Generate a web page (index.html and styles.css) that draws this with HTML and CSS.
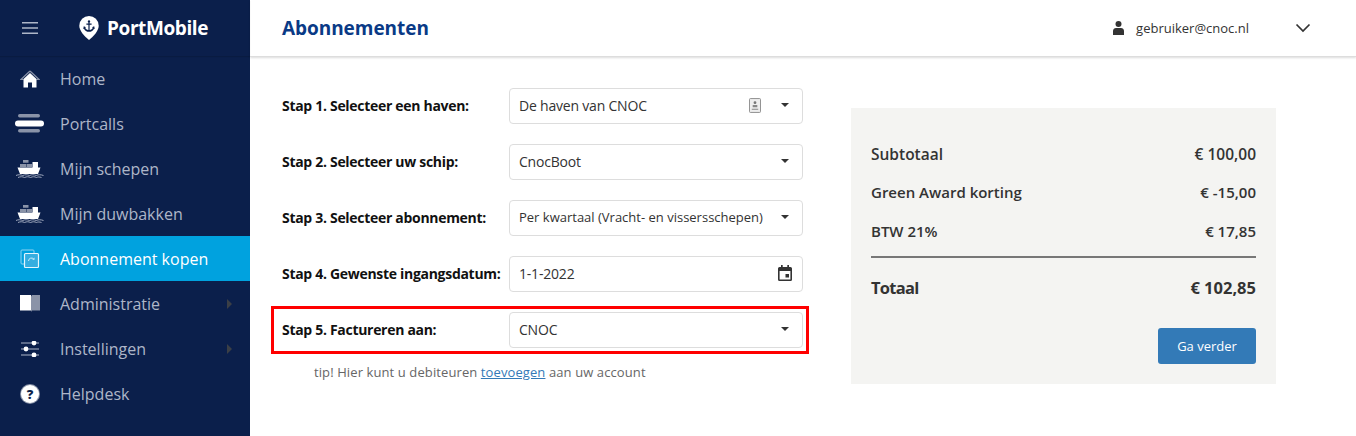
FILE: index.html
```html
<!DOCTYPE html>
<html lang="nl">
<head>
<meta charset="utf-8">
<title>Abonnementen</title>
<link rel="stylesheet" href="styles.css">
</head>
<body>
<div class="app">
  <aside class="sidebar">
    <div class="brand">
      <svg class="burger" width="16" height="12" viewBox="0 0 16 12"><path d="M0 0h16v1.600H0zM0 5.200h16v1.600H0zM0 10.400h16V12H0z" fill="#aeb6c8"/></svg>
      <div class="logo">
        <svg width="20" height="24" viewBox="0 0 20 24"><path d="M10 0a9.700 9.700 0 0 1 9.700 9.700c0 5-5.200 10.600-9.700 14.300C5.500 20.300.3 14.700.3 9.700A9.700 9.700 0 0 1 10 0z" fill="#fff"/><path d="M10 4.200a1.300 1.300 0 0 1 .6 2.400v1h2v1.200h-2v5.300c1.600-.2 2.800-1.100 3.300-2.300l-1-.5 2.300-1 .6 2.800-.8-.4c-.8 2-2.700 3.100-5 3.100s-4.200-1.100-5-3.100l-.8.4.6-2.800 2.300 1-1 .5c.5 1.200 1.700 2.100 3.300 2.300V8.800h-2V7.600h2v-1a1.300 1.300 0 0 1 .6-2.400z" fill="#0b1f4b"/></svg>
        <span>PortMobile</span>
      </div>
    </div>
    <nav>
      <a class="item"><span class="ico"><svg width="20" height="18" viewBox="0 0 20 18"><path d="M10 1 1 9.500h2.500" fill="none" stroke="#8a93a8" stroke-width="1.200"/><path d="M10 1l9 8.500h-2.500" fill="none" stroke="#8a93a8" stroke-width="1.200"/><path d="M10 3 3.500 9v8.500h4.500v-5h4v5h4.500V9z" fill="#fff"/></svg></span>Home</a>
      <a class="item"><span class="ico"><svg width="30" height="19" viewBox="0 0 30 19"><rect x="3" y="0" width="22" height="3.500" rx="1.700" fill="#8a93a8"/><rect x="0" y="6.500" width="29" height="6" rx="3" fill="#fff"/><rect x="3" y="15" width="22" height="3.500" rx="1.700" fill="#8a93a8"/></svg></span>Portcalls</a>
      <a class="item"><span class="ico"><svg width="30" height="19" viewBox="0 0 30 19"><use href="#ship"/></svg></span>Mijn schepen</a>
      <a class="item"><span class="ico"><svg width="30" height="19" viewBox="0 0 30 19"><use href="#ship"/></svg></span>Mijn duwbakken</a>
      <a class="item active"><span class="ico"><svg width="20" height="20" viewBox="0 0 20 20"><rect x="1" y="1" width="13" height="14" rx="1" fill="none" stroke="#8fd3f0" stroke-width="1"/><rect x="4.500" y="4.500" width="14" height="14" rx="1" fill="#35aee0" stroke="#e6f6fd" stroke-width="1.200"/><path d="M8.500 12a3 3 0 0 1 5.200-2" fill="none" stroke="#cdeefb" stroke-width="1"/><path d="M14.500 8.500v2.300h-2.300z" fill="#cdeefb"/></svg></span>Abonnement kopen</a>
      <a class="item has-sub"><span class="ico"><svg width="20" height="17" viewBox="0 0 20 17"><path d="M0 0h11v15.500H0z" fill="#fff"/><path d="M11 1.500 12 0h8v15.500h-8l-1 1.500z" fill="#8a93a8"/></svg></span>Administratie<i class="caret"></i></a>
      <a class="item has-sub"><span class="ico"><svg width="18" height="16" viewBox="0 0 18 16"><path d="M0 2h18M0 8h18M0 14h18" stroke="#aeb6c8" stroke-width="1"/><circle cx="13" cy="2" r="2.400" fill="#fff"/><circle cx="5" cy="8" r="2.400" fill="#fff"/><circle cx="13" cy="14" r="2.400" fill="#fff"/></svg></span>Instellingen<i class="caret"></i></a>
      <a class="item"><span class="ico help">?</span>Helpdesk</a>
    </nav>
    <svg class="defs" width="0" height="0"><defs><g id="ship"><path d="M8 1h5.500v2.700H8zM5 5h6v3H5zM11.500 5h5.500v3h-5.500z" fill="#8a93a8"/><path d="M17.500 3H23v5.500h2.500L23 15H5L2.500 8.500h15z" fill="#fff"/><path d="M1 16.500c2.300-1 4.500-1 6.700 0 2.300-1 4.500-1 6.800 0 2.300-1 4.500-1 6.700 0 2.300-1 4.500-1 7.300 0M3 18.500c2.300-1 4.500-1 6.500 0 2.300-1 4-1 6 0 2.300-1 4-1 6 0 1.500-.7 3-.7 5 0" fill="none" stroke="#aeb6c8" stroke-width=".9"/></g></defs></svg>
  </aside>

  <div class="content">
    <header class="topbar">
      <h1>Abonnementen</h1>
      <div class="user">
        <svg width="11" height="14" viewBox="0 0 11 14"><circle cx="5.500" cy="3" r="3" fill="#333"/><path d="M0 14v-4c0-2 1.500-3 3-3h5c1.500 0 3 1 3 3v4z" fill="#333"/></svg>
        <span>gebruiker@cnoc.nl</span>
        <svg class="chev" width="16" height="10" viewBox="0 0 16 10"><path d="M1.500 1.500 8 8l6.500-6.500" fill="none" stroke="#333" stroke-width="1.700"/></svg>
      </div>
    </header>

    <main class="body">
      <section class="form">
        <div class="row">
          <label>Stap 1. Selecteer een haven:</label>
          <div class="field"><span class="val">De haven van CNOC</span>
            <svg class="card" width="12" height="15" viewBox="0 0 13 16"><rect x=".5" y=".5" width="12" height="15" rx="1" fill="#eee" stroke="#888"/><circle cx="6.500" cy="5" r="1.500" fill="#777"/><path d="M4 7.500h5V10H4zM3 11.500h7v1H3z" fill="#888"/></svg>
            <i class="arrow"></i></div>
        </div>
        <div class="row">
          <label>Stap 2. Selecteer uw schip:</label>
          <div class="field"><span class="val">CnocBoot</span><i class="arrow"></i></div>
        </div>
        <div class="row">
          <label>Stap 3. Selecteer abonnement:</label>
          <div class="field"><span class="val small">Per kwartaal (Vracht- en vissersschepen)</span><i class="arrow"></i></div>
        </div>
        <div class="row">
          <label>Stap 4. Gewenste ingangsdatum:</label>
          <div class="field"><span class="val">1-1-2022</span>
            <svg class="cal" width="14" height="16" viewBox="0 0 14 16"><path d="M3 0h1.700v2h4.600V0H11v2h1.500A1.500 1.500 0 0 1 14 3.500v11a1.500 1.500 0 0 1-1.500 1.500h-11A1.500 1.500 0 0 1 0 14.500v-11A1.500 1.500 0 0 1 1.500 2H3zM1.600 6v8.400h10.800V6z" fill="#333"/><rect x="7.500" y="9" width="3.500" height="3.500" fill="#333"/></svg></div>
        </div>
        <div class="row marked">
          <label>Stap 5. Factureren aan:</label>
          <div class="field"><span class="val">CNOC</span><i class="arrow"></i></div>
        </div>
        <p class="tip">tip! Hier kunt u debiteuren <a href="#">toevoegen</a> aan uw account</p>
      </section>

      <section class="summary">
        <div class="line first"><span>Subtotaal</span><span>€ 100,00</span></div>
        <div class="line"><span>Green Award korting</span><span>€ -15,00</span></div>
        <div class="line"><span>BTW 21%</span><span>€ 17,85</span></div>
        <hr>
        <div class="line total"><span class="tot">Totaal</span><span>€ 102,85</span></div>
        <div class="actions"><button>Ga verder</button></div>
      </section>
    </main>
  </div>
</div>
</body>
</html>
```
FILE: styles.css
```css
* { box-sizing: border-box; }
html, body { margin: 0; height: 100%; overflow: hidden; }
body { font-family: "Open Sans", "Liberation Sans", sans-serif; color: #333; background: #fff; }
.app { display: flex; height: 436px; }

.sidebar { width: 250px; flex: none; background: #0b1f4b; }
.brand { height: 56px; display: flex; align-items: center; padding-left: 22px; box-shadow: 0 1px 1px rgba(0,0,0,.12); }
.burger { flex: none; }
.logo { display: flex; align-items: center; gap: 8px; margin-left: 41px; color: #fff; font-weight: 700; font-size: 19px; letter-spacing: -.4px; }
.item { height: 45px; display: flex; align-items: center; color: #aeb6c8; font-size: 16px; }
.item.active { background: #00a2df; color: #fff; }
.ico { width: 60px; flex: none; display: flex; justify-content: center; padding-right: 1px; }
.help { width: 18px; height: 18px; margin: 0 21px; padding: 0; border-radius: 50%; background: #fff; color: #0b1f4b; font-weight: 800; font-size: 13px; line-height: 18px; box-shadow: 0 0 0 1px #8a93a8; }
.caret { margin-left: auto; margin-right: 18px; width: 0; height: 0; border-left: 5px solid #3b3f46; border-top: 5px solid transparent; border-bottom: 5px solid transparent; }
.defs { display: block; }

.content { flex: 1; min-width: 0; display: flex; flex-direction: column; }
.topbar { height: 57px; flex: none; display: flex; align-items: center; justify-content: space-between; padding-left: 32px; border-bottom: 1px solid #ddd; box-shadow: 0 1px 2px rgba(0,0,0,.14); }
h1 { margin: 0; font-size: 19px; font-weight: 700; color: #0a3a86; letter-spacing: -.05px; }
.user { display: flex; align-items: center; font-size: 13px; padding-right: 45px; }
.user span { margin-left: 12px; }
.chev { margin-left: 46px; }

.body { display: flex; align-items: flex-start; padding: 31px 80px 0 32px; }
.form { width: 521px; flex: none; display: flex; flex-direction: column; gap: 20px; }
.row { display: flex; align-items: center; height: 36px; }
.row label { width: 227px; flex: none; padding-bottom: 2px; font-size: 14px; font-weight: 700; color: #111; letter-spacing: -.3px; }
.field { flex: 1; height: 36px; display: flex; align-items: center; padding: 0 13px 2px 9px; background: #fff; border: 1px solid #ddd; border-radius: 4px; font-size: 14px; }
.val { flex: 1; min-width: 0; white-space: nowrap; letter-spacing: -.2px; }
.val.small { font-size: 13px; letter-spacing: 0; }
.card { margin-right: 20px; }
.arrow { width: 0; height: 0; border-top: 4px solid #333; border-left: 4.500px solid transparent; border-right: 4.500px solid transparent; }
.cal { margin-right: -3px; }
.row.marked { height: 48px; margin: -6px -6px -6px -11px; padding: 3px 3px 3px 8px; border: 3px solid #f00; }
.tip { margin: -5px 0 0 32px; font-size: 13px; letter-spacing: .1px; color: #666; }
.tip a { color: #337ab7; }

.summary { width: 425px; height: 276px; flex: none; margin: 20px 0 0 48px; padding: 26.500px 20px 0; background: #f4f4f2; }
.line { display: flex; justify-content: space-between; align-items: center; height: 38.500px; font-size: 15px; font-weight: 600; }
.line.first { font-size: 15.500px; }
hr { border: 0; height: 2px; background: #777; margin: 5.500px 0 10px; }
.line.total { font-size: 16.500px; font-weight: 700; height: 40px; }
.tot { letter-spacing: -.7px; }
.actions { display: flex; justify-content: flex-end; margin-top: 20px; }
button { width: 98px; height: 36px; border: 0; border-radius: 3px; background: #337ab7; color: #fff; font: 400 13px "Open Sans", sans-serif; }
```
